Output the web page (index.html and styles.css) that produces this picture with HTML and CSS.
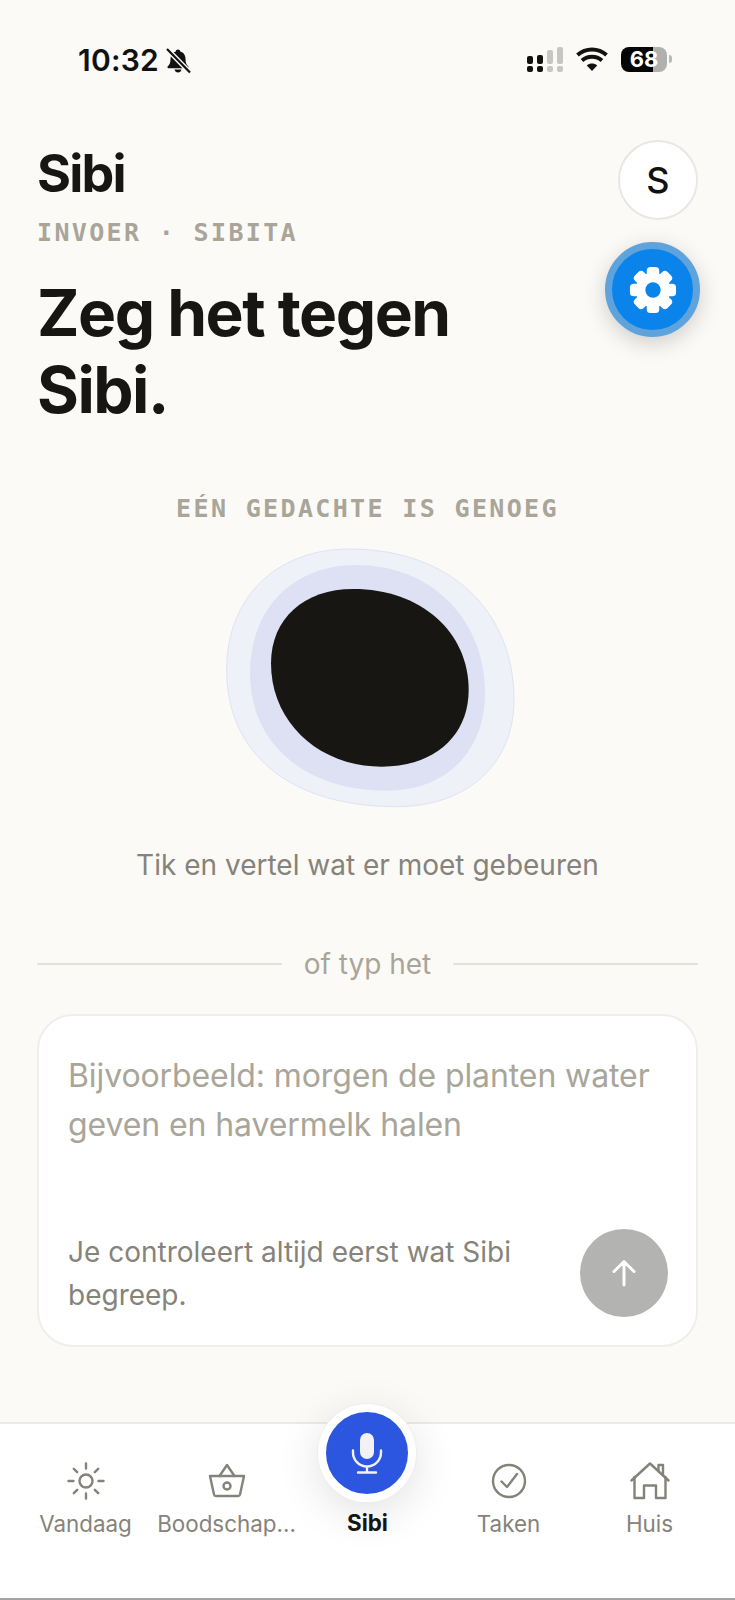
FILE: index.html
```html
<!DOCTYPE html>
<html lang="nl">
  <head>
    <meta charset="UTF-8" />
    <meta name="viewport" content="width=device-width, initial-scale=1.0" />
    <title>Sibi</title>
    <link rel="stylesheet" href="styles.css">
  </head>
  <body>
    <div class="app">
      <div class="statusbar">
        <div class="status-left">
          <span class="clock">10:32</span>
          <svg class="bell" viewBox="0 0 26 26" width="26" height="26">
            <path d="M13 1.500c-1.300 0-2.200.9-2.200 2C7.200 4.400 5.500 7.300 5.500 11c0 3.700-.9 5.700-2.700 7.300-.7.700-.3 2 .8 2h18.800c1.100 0 1.500-1.300.8-2-1.800-1.600-2.700-3.600-2.700-7.300 0-3.700-1.700-6.600-5.300-7.500 0-1.100-.9-2-2.200-2z" fill="#111"/>
            <path d="M9.500 21.500c.4 1.700 1.800 3 3.500 3s3.100-1.300 3.500-3z" fill="#111"/>
            <path d="M2 1 25 24.500" stroke="#fbfaf7" stroke-width="5"/>
            <path d="M2 1 25 24.500" stroke="#111" stroke-width="2.200"/>
          </svg>
        </div>
        <div class="status-right">
          <svg class="signal" viewBox="0 0 38 26" width="38" height="26">
            <rect x="0" y="10" width="6" height="8" rx="2" fill="#111"/>
            <rect x="10" y="9" width="6" height="9" rx="2" fill="#111"/>
            <rect x="20" y="4" width="6" height="14" rx="2" fill="#c6c6c4"/>
            <rect x="30" y="1" width="6" height="17" rx="2" fill="#c6c6c4"/>
            <rect x="0" y="20" width="6" height="6" rx="2" fill="#111"/>
            <rect x="10" y="20" width="6" height="6" rx="2" fill="#111"/>
            <rect x="20" y="20" width="6" height="6" rx="2" fill="#c6c6c4"/>
            <rect x="30" y="20" width="6" height="6" rx="2" fill="#c6c6c4"/>
          </svg>
          <svg class="wifi" viewBox="0 0 32 24" width="32" height="24">
            <path d="M16 24 10.800 18.400c3-2.500 7.400-2.500 10.400 0z" fill="#111"/>
            <path d="M6 13.500c5.800-5 14.200-5 20 0" fill="none" stroke="#111" stroke-width="4"/>
            <path d="M1.500 8C9.800.6 22.200.6 30.500 8" fill="none" stroke="#111" stroke-width="4"/>
          </svg>
          <div class="battery">
            <span class="battery-level">68</span>
          </div>
          <span class="battery-tip"></span>
        </div>
      </div>

      <main class="content">
        <header class="top">
          <div class="top-text">
            <div class="brand">Sibi</div>
            <div class="eyebrow">INVOER · SIBITA</div>
            <h1>Zeg het tegen<br>Sibi.</h1>
          </div>
          <div class="avatar">S</div>
        </header>

        <section class="voice">
          <div class="voice-label">EÉN GEDACHTE IS GENOEG</div>
          <svg class="blob" viewBox="0 0 1020 870" width="340" height="290">
            <path d="M450 57C745 57 942 238 942 510C942 702 801 830 590 830C274 830 80 674 80 420C80 202 228 57 450 57Z" fill="#eff1f8" stroke="#dfe3f1" stroke-width="3"/>
            <path d="M470 105C693 105 855 267 855 490C855 665 737 782 560 782C314 782 150 641 150 430C150 235 278 105 470 105Z" fill="#dde1f3"/>
            <path d="M460 177C661 177 806 304 806 480C806 618 702 710 545 710C356 710 213 577 213 400C213 266 312 177 460 177Z" fill="#171612"/>
          </svg>
          <p class="voice-hint">Tik en vertel wat er moet gebeuren</p>
        </section>

        <div class="divider"><span>of typ het</span></div>

        <section class="card">
          <div class="placeholder">Bijvoorbeeld: morgen de planten water geven en havermelk halen</div>
          <div class="card-foot">
            <p class="note">Je controleert altijd eerst wat Sibi begreep.</p>
            <button class="send">
              <svg viewBox="0 0 30 30" width="30" height="30">
                <path d="M15 27V4M5 13.500 15 3.500l10 10" fill="none" stroke="#fff" stroke-width="3" stroke-linecap="round" stroke-linejoin="round"/>
              </svg>
            </button>
          </div>
        </section>
      </main>

      <nav class="tabs">
        <div class="tab">
          <svg class="tab-icon" viewBox="0 0 40 40" width="40" height="40">
            <circle cx="20" cy="20" r="6.500"/>
            <path d="M20 2.500v5M20 32.500v5M2.500 20h5M32.500 20h5M7.800 7.800l3.400 3.400M28.800 28.800l3.400 3.400M7.800 32.200l3.400-3.400M28.800 11.200l3.400-3.400"/>
          </svg>
          <span>Vandaag</span>
        </div>
        <div class="tab">
          <svg class="tab-icon" viewBox="0 0 40 40" width="40" height="40">
            <path d="M3 15h34l-4 18.500a2 2 0 0 1-2 1.500H9a2 2 0 0 1-2-1.500z"/>
            <path d="M12.500 15 20 4l7.500 11"/>
            <circle cx="20" cy="25" r="3.500"/>
          </svg>
          <span>Boodschap...</span>
        </div>
        <div class="tab tab-active">
          <button class="mic">
            <svg viewBox="0 0 34 42" width="34" height="42">
              <rect x="10" y="1" width="14" height="26" rx="7" fill="#f3f1f4"/>
              <path d="M3 18.500v2a14 14 0 0 0 28 0v-2M17 34.500V40M8 40.500h18" fill="none" stroke="#f3f1f4" stroke-width="2.400" stroke-linecap="round"/>
            </svg>
          </button>
          <span>Sibi</span>
        </div>
        <div class="tab">
          <svg class="tab-icon" viewBox="0 0 40 40" width="40" height="40">
            <circle cx="20" cy="20" r="16"/>
            <path d="M12.500 20.500 18 26l10-13"/>
          </svg>
          <span>Taken</span>
        </div>
        <div class="tab">
          <svg class="tab-icon" viewBox="0 0 40 40" width="40" height="40">
            <path d="M1.500 19.500 20 2.500l18.500 17"/>
            <path d="M4.500 16v21h9.500V24.500h12V37h9.500V16"/>
            <path d="M28.500 9V4H33v10"/>
          </svg>
          <span>Huis</span>
        </div>
      </nav>

      <button class="settings">
        <svg viewBox="-25 -25 50 50" width="48" height="48">
          <g fill="#fff">
            <rect x="-6.500" y="-24" width="13" height="48" rx="4"/>
            <rect x="-6.500" y="-24" width="13" height="48" rx="4" transform="rotate(45)"/>
            <rect x="-6.500" y="-24" width="13" height="48" rx="4" transform="rotate(90)"/>
            <rect x="-6.500" y="-24" width="13" height="48" rx="4" transform="rotate(135)"/>
            <circle r="18"/>
          </g>
          <circle r="8" fill="#0a84ea"/>
        </svg>
      </button>
    </div>
  </body>
</html>
```

FILE: styles.css
```css
body {
  margin: 0;
  background-color: #fbfaf7;
  font-family: "Inter", "Liberation Sans", sans-serif;
  color: #171612;
}

.app {
  position: relative;
  display: flex;
  flex-direction: column;
  width: 735px;
  height: 1600px;
  overflow: hidden;
}

/* status bar */
.statusbar {
  display: flex;
  justify-content: space-between;
  align-items: flex-start;
  height: 140px;
  box-sizing: border-box;
  padding: 46px 63px 0 78px;
  flex-shrink: 0;
}

.status-left {
  display: flex;
  align-items: center;
  gap: 6px;
}

.clock {
  font-size: 30px;
  line-height: 29px;
  font-weight: 600;
  letter-spacing: 0.2px;
  color: #111;
}

.status-right {
  display: flex;
  align-items: center;
  position: relative;
}

.signal {
  margin-right: 11px;
}

.wifi {
  margin-right: 13px;
}

.battery {
  width: 46px;
  height: 25px;
  border-radius: 8px;
  background: linear-gradient(to right, #050505 70%, #b0b0ae 70%);
  display: flex;
  justify-content: center;
  align-items: center;
}

.battery-level {
  font-size: 22px;
  font-weight: 700;
  color: #fff;
}

.battery-tip {
  width: 3px;
  height: 8px;
  margin-left: 2px;
  border-radius: 0 4px 4px 0;
  background: #b8b8b6;
}

/* main column */
.content {
  flex: 1;
  padding: 0 37px;
}

.top {
  display: flex;
  justify-content: space-between;
  align-items: flex-start;
}

.top-text {
  padding-top: 6px;
}

.brand {
  font-size: 52px;
  line-height: 56px;
  font-weight: 700;
  letter-spacing: -1.8px;
}

.eyebrow,
.voice-label {
  font-family: "DejaVu Sans Mono", monospace;
  font-size: 25px;
  line-height: 28px;
  font-weight: 700;
  letter-spacing: 2.35px;
  color: #a9a599;
}

.eyebrow {
  margin-top: 17px;
}

h1 {
  margin: 27px 0 0;
  font-size: 64px;
  line-height: 77px;
  font-weight: 700;
  letter-spacing: -1.5px;
}

.avatar {
  width: 80px;
  height: 80px;
  box-sizing: border-box;
  border: 2px solid #e9e7e3;
  border-radius: 50%;
  background: #fff;
  display: flex;
  justify-content: center;
  align-items: center;
  font-size: 36px;
  font-weight: 500;
  color: #111;
}

.settings {
  position: absolute;
  top: 242px;
  left: 605px;
  width: 95px;
  height: 95px;
  padding: 0;
  border: 7px solid #5fa3dc;
  border-radius: 50%;
  background: #0a84ea;
  box-shadow: 0 6px 22px rgba(0, 0, 0, 0.18);
  display: flex;
  justify-content: center;
  align-items: center;
}

/* voice blob */
.voice {
  display: flex;
  flex-direction: column;
  align-items: center;
  margin-top: 67px;
}

.blob {
  margin: 7px 0 0 5px;
}

.voice-hint {
  margin: 27px 0 0;
  font-size: 28px;
  line-height: 36px;
  color: #86837a;
}

.divider {
  display: flex;
  align-items: center;
  gap: 22px;
  margin-top: 63px;
  font-size: 28px;
  line-height: 36px;
  color: #a9a599;
}

.divider::before,
.divider::after {
  content: "";
  flex: 1;
  height: 2px;
  background: #e3e1db;
}

/* text card */
.card {
  display: flex;
  flex-direction: column;
  justify-content: space-between;
  height: 333px;
  box-sizing: border-box;
  margin-top: 32px;
  padding: 35px 28px 28px 29px;
  border: 2px solid #f0eeea;
  border-radius: 36px;
  background: #fff;
}

.placeholder {
  font-size: 32px;
  line-height: 49px;
  letter-spacing: -0.1px;
  color: #a9a599;
}

.card-foot {
  display: flex;
  justify-content: space-between;
  align-items: flex-end;
  gap: 30px;
}

.note {
  margin: 0;
  font-size: 28px;
  line-height: 43px;
  color: #86837a;
}

.send {
  width: 88px;
  height: 88px;
  flex-shrink: 0;
  padding: 0;
  border: none;
  border-radius: 50%;
  background: #b3b3b2;
  display: flex;
  justify-content: center;
  align-items: center;
}

/* bottom tabs */
.tabs {
  display: grid;
  grid-template-columns: repeat(5, 141px);
  height: 178px;
  box-sizing: border-box;
  padding: 37px 15px 0;
  flex-shrink: 0;
  background: #fff;
  border-top: 2px solid #eceae6;
  border-bottom: 2px solid #a4a4a4;
}

.tab {
  position: relative;
  display: flex;
  flex-direction: column;
  align-items: center;
  gap: 8px;
  font-size: 22.4px;
  line-height: 30px;
  color: #86837a;
  white-space: nowrap;
}

.tab-icon {
  fill: none;
  stroke: #85827a;
  stroke-width: 2.400;
  stroke-linecap: round;
  stroke-linejoin: round;
}

.tab-active {
  padding-top: 47px;
  font-weight: 700;
  color: #171612;
}

.mic {
  position: absolute;
  top: -57px;
  left: 21px;
  width: 98px;
  height: 98px;
  padding: 0;
  box-sizing: border-box;
  border: 8px solid #fff;
  border-radius: 50%;
  background: #2c56e0;
  box-shadow: 0 0 0 1px #f0eeea, 0 10px 44px rgba(0, 0, 0, 0.12);
  display: flex;
  justify-content: center;
  align-items: center;
}
```
